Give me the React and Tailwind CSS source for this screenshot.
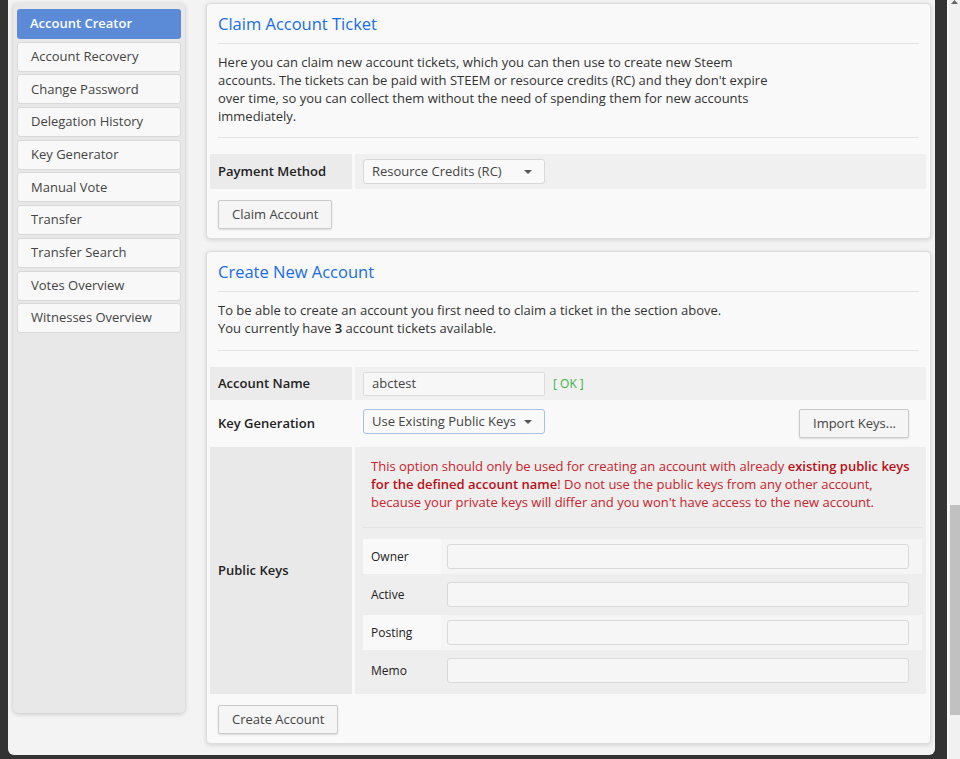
import React from 'react';

const menu = [
  'Account Creator',
  'Account Recovery',
  'Change Password',
  'Delegation History',
  'Key Generator',
  'Manual Vote',
  'Transfer',
  'Transfer Search',
  'Votes Overview',
  'Witnesses Overview',
];

const Caret = () => (
  <svg width="8" height="4" viewBox="0 0 8 4" className="ml-auto mr-[12px]">
    <path d="M0 0h8L4 4z" fill="#555" />
  </svg>
);

const Select = ({ value, focused }) => (
  <div
    className={`w-[182px] h-[25px] flex items-center pl-[8px] rounded-[3px] border bg-[#f9f9f9] text-[13px] text-[#444] whitespace-nowrap ${
      focused ? 'border-[#a8c0e2]' : 'border-[#d8d8d8]'
    }`}
  >
    <span>{value}</span>
    <Caret />
  </div>
);

const Button = ({ children, className = '' }) => (
  <button
    className={`h-[29px] px-[13px] rounded-[2px] border border-[#cacaca] bg-[#f5f5f5] text-[13px] text-[#444] whitespace-nowrap shadow-[0_1px_2px_rgba(0,0,0,0.12)] ${className}`}
  >
    {children}
  </button>
);

const Rule = ({ className = '' }) => <div className={`border-t border-[#e2e2e2] ${className}`} />;

const Label = ({ children, className = '' }) => (
  <div className={`w-[142px] shrink-0 pl-[8px] flex items-center text-[13px] font-semibold text-[#222] ${className}`}>
    {children}
  </div>
);

const KeyRow = ({ name, light }) => (
  <div className="flex h-[35px]">
    <div className={`w-[78px] pl-[8px] flex items-center text-[12px] text-[#222] ${light ? 'bg-[#f9f9f9]' : ''}`}>
      {name}
    </div>
    <div className={`flex-1 flex items-center pl-[6px] pr-[13px] ${light ? 'bg-[#f5f5f5]' : ''}`}>
      <div className="w-full h-[25px] rounded-[3px] border border-[#d9d9d9] bg-[#f6f6f6]" />
    </div>
  </div>
);

const Card = ({ title, children }) => (
  <section className="bg-[#f9f9f9] border border-[#dcdcdc] rounded-[4px] shadow-[0_1px_4px_rgba(0,0,0,0.14)] px-[3px] pt-[9px] pb-[9px]">
    <h2 className="px-[8px] text-[16.5px] leading-[22px] text-[#176de6]">{title}</h2>
    <div className="px-[8px]">
      <Rule className="mt-[8px]" />
    </div>
    {children}
  </section>
);

export default function App() {
  return (
    <div className="w-[960px] h-[759px] bg-[#333] flex overflow-hidden font-['Open_Sans',sans-serif]">
      <div className="w-[8px] shrink-0" />
      <div className="w-[927px] h-[755px] shrink-0 bg-[#f3f3f3] rounded-b-[6px] flex pl-[5px] pt-[3px] pr-[4px]">
        {/* sidebar */}
        <aside className="w-[172px] h-[710px] shrink-0 bg-[#e8e8e8] rounded-[5px] shadow-[0_1px_4px_rgba(0,0,0,0.2)] px-[4px] pt-[6px] flex flex-col gap-[2.7px]">
          {menu.map((item, i) => (
            <div
              key={item}
              className={
                i === 0
                  ? 'h-[30px] flex items-center pl-[13px] rounded-[3px] bg-[#5b8bd7] text-white text-[13px] font-semibold'
                  : 'h-[30px] flex items-center pl-[13px] rounded-[3px] border border-[#d9d9d9] bg-[#f8f8f8] text-[13px] text-[#444]'
              }
            >
              {item}
            </div>
          ))}
        </aside>

        <main className="ml-[21px] flex-1 flex flex-col gap-[12px]">
          <Card title="Claim Account Ticket">
            <p className="px-[8px] mt-[9px] text-[13px] leading-[18px] text-[#333]">
              Here you can claim new account tickets, which you can then use to create new Steem
              <br />
              accounts. The tickets can be paid with STEEM or resource credits (RC) and they don't expire
              <br />
              over time, so you can collect them without the need of spending them for new accounts
              <br />
              immediately.
            </p>
            <div className="px-[8px]">
              <Rule className="mt-[12px]" />
            </div>
            <div className="mt-[16px] flex gap-[3px] h-[35px] mr-[1px]">
              <Label className="bg-[#ebebeb]">Payment Method</Label>
              <div className="flex-1 bg-[#f0f0f0] flex items-center pl-[8px]">
                <Select value="Resource Credits (RC)" />
              </div>
            </div>
            <Button className="mt-[11px] ml-[8px]">Claim Account</Button>
          </Card>

          <Card title="Create New Account">
            <p className="px-[8px] mt-[9px] text-[13px] leading-[18px] text-[#333]">
              To be able to create an account you first need to claim a ticket in the section above.
              <br />
              You currently have <b className="font-semibold text-[#222]">3</b> account tickets available.
            </p>
            <div className="px-[8px]">
              <Rule className="mt-[13px]" />
            </div>

            <div className="mt-[16px] flex flex-col gap-[3px] mr-[1px]">
              <div className="flex gap-[3px] h-[33px]">
                <Label className="bg-[#ebebeb]">Account Name</Label>
                <div className="flex-1 bg-[#f0f0f0] flex items-center pl-[8px]">
                  <div className="w-[182px] h-[24px] flex items-center pl-[8px] rounded-[2px] border border-[#dcdcdc] bg-[#f7f7f7] text-[13px] text-[#444]">
                    abctest
                  </div>
                  <span className="ml-[8px] text-[12px] text-[#3cb043]">[ OK ]</span>
                </div>
              </div>

              <div className="flex gap-[3px] h-[41px]">
                <Label>Key Generation</Label>
                <div className="flex-1 flex items-start pt-[6px] pl-[8px] pr-[17px]">
                  <Select value="Use Existing Public Keys" focused />
                  <Button className="ml-auto w-[110px] px-0">Import Keys...</Button>
                </div>
              </div>

              <div className="flex gap-[3px] h-[247px]">
                <Label className="bg-[#e9e9e9]">Public Keys</Label>
                <div className="flex-1 bg-[#eeeeee] pl-[8px] pr-[4px] pt-[10px]">
                  <p className="pl-[8px] text-[13px] leading-[18px] text-[#c8232c]">
                    This option should only be used for creating an account with already{' '}
                    <b className="font-semibold text-[#b80f17]">existing public keys</b>
                    <br />
                    <b className="font-semibold text-[#b80f17]">for the defined account name</b>! Do not use the public keys from any other account,
                    <br />
                    because your private keys will differ and you won't have access to the new account.
                  </p>
                  <Rule className="mt-[16px] border-[#dedede]" />
                  <div className="mt-[11px] flex flex-col gap-[3px]">
                    <KeyRow name="Owner" light />
                    <KeyRow name="Active" />
                    <KeyRow name="Posting" light />
                    <KeyRow name="Memo" />
                  </div>
                </div>
              </div>
            </div>
            <Button className="mt-[11px] ml-[8px]">Create Account</Button>
          </Card>
        </main>
      </div>
      <div className="w-[12px] shrink-0" />
      {/* scrollbar */}
      <div className="w-[13px] shrink-0 bg-[#f1f1f1] border-l-2 border-[#fafafa] flex flex-col items-center">
        <svg width="7" height="4" viewBox="0 0 7 4" className="mt-0">
          <path d="M0 4h7L3.5 0z" fill="#666" />
        </svg>
        <div className="mt-[501px] ml-[2px] w-[11px] h-[210px] bg-[#c1c1c1]" />
      </div>
    </div>
  );
}
